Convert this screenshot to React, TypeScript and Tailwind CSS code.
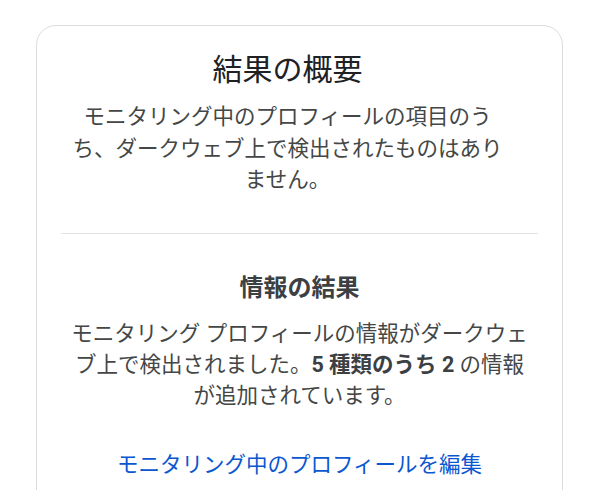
export default function App() {
  return (
    <div
      className="h-[490px] overflow-hidden bg-white pt-[25px] pl-[36px]"
      style={{ fontFamily: 'Roboto, "Noto Sans CJK JP", sans-serif' }}
    >
      <div className="w-[527px] h-[520px] rounded-[20px] border-[1.5px] border-[#dcdcdc] px-6 pt-6 text-center">
        {/* Summary */}
        <div className="pl-[6px] pr-[30px]">
          <h1 className="text-[30px] leading-[40px] font-normal text-[#202124]">結果の概要</h1>
          <p className="mt-[11px] text-[21.5px] leading-[31.5px] text-[#444746]">
            モニタリング中のプロフィールの項目のうち、ダークウェブ上で検出されたものはありません。
          </p>
        </div>

        <div className="mt-[37px] h-[1.5px] bg-[#e3e3e3]" />

        {/* Info results */}
        <h2 className="mt-[38px] text-[24px] leading-[32px] font-bold text-[#3c4043]">情報の結果</h2>
        <p className="mx-[5px] mt-[14px] text-[21.5px] leading-[31px] text-[#444746]">
          モニタリング プロフィールの情報がダークウェブ上で検出されました。
          <span className="font-bold text-[#3c4043]">5 種類のうち 2</span> の情報が追加されています。
        </p>

        <a href="#" className="mt-[38px] block text-[21.5px] leading-[31px] text-[#0b57d0]">
          モニタリング中のプロフィールを編集
        </a>
      </div>
    </div>
  );
}
